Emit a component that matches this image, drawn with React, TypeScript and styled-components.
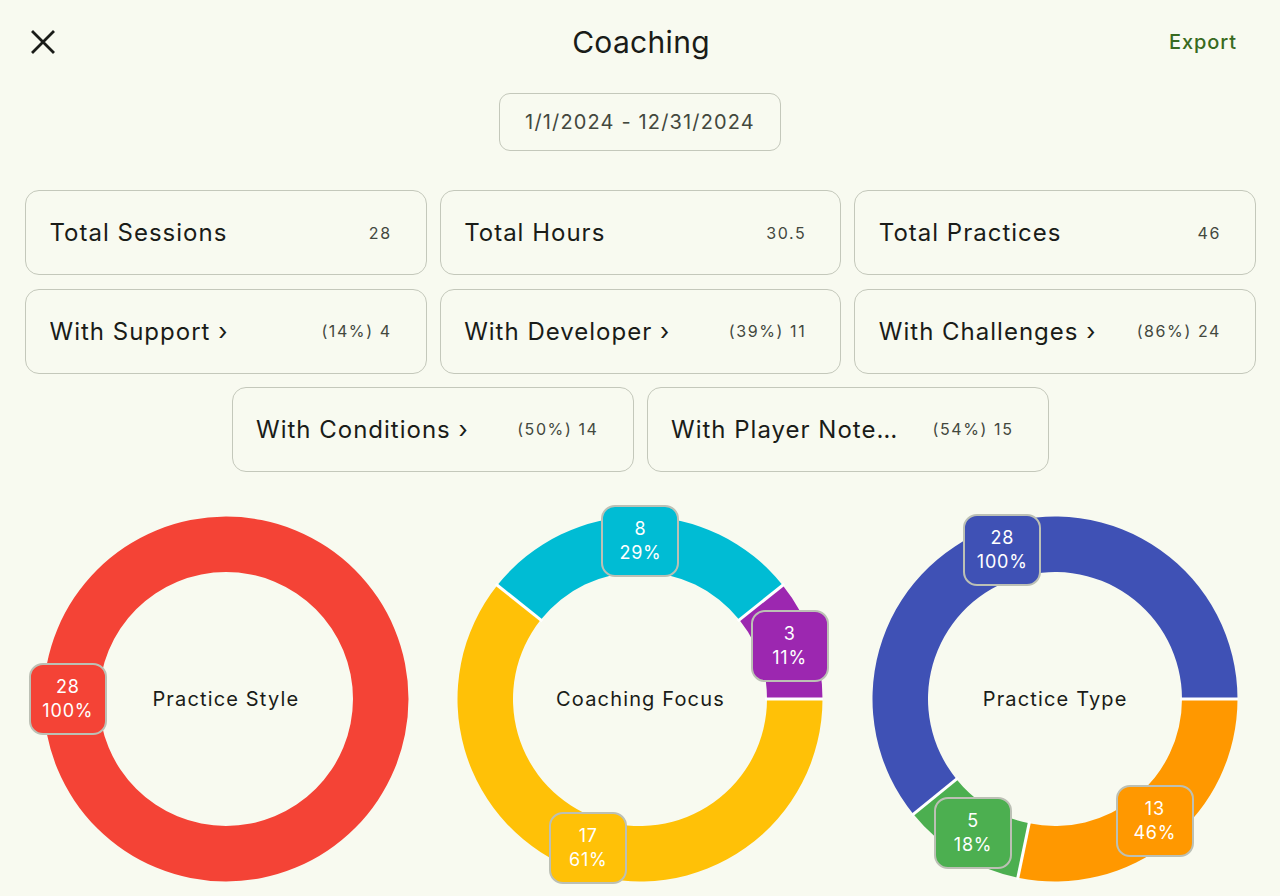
import React from 'react';
import styled, { createGlobalStyle } from 'styled-components';

const BG = '#f8faf0';
const OUTLINE = '#c4c8bb';
const TEXT = '#1a1c18';
const TEXT_SOFT = '#43483e';

interface Stat {
  label: string;
  value: string;
  link?: boolean;
}

interface Slice {
  value: number;
  percent: string;
  color: string;
}

interface Chart {
  title: string;
  slices: Slice[];
}

const topStats: Stat[] = [
  { label: 'Total Sessions', value: '28' },
  { label: 'Total Hours', value: '30.5' },
  { label: 'Total Practices', value: '46' },
  { label: 'With Support', value: '(14%) 4', link: true },
  { label: 'With Developer', value: '(39%) 11', link: true },
  { label: 'With Challenges', value: '(86%) 24', link: true },
];

const lastStats: Stat[] = [
  { label: 'With Conditions', value: '(50%) 14', link: true },
  { label: 'With Player Notes', value: '(54%) 15', link: true },
];

const charts: Chart[] = [
  {
    title: 'Practice Style',
    slices: [{ value: 28, percent: '100%', color: '#f44336' }],
  },
  {
    title: 'Coaching Focus',
    slices: [
      { value: 17, percent: '61%', color: '#ffc107' },
      { value: 8, percent: '29%', color: '#00bcd4' },
      { value: 3, percent: '11%', color: '#9c27b0' },
    ],
  },
  {
    title: 'Practice Type',
    slices: [
      { value: 13, percent: '46%', color: '#ff9800' },
      { value: 5, percent: '18%', color: '#4caf50' },
      { value: 28, percent: '100%', color: '#3f51b5' },
    ],
  },
];

const SIZE = 366;
const C = SIZE / 2;
const OUTER = 182.5;
const INNER = 127;
const BADGE_R = 158;

const rad = (deg: number) => (deg * Math.PI) / 180;
const pt = (r: number, deg: number) => [C + r * Math.cos(rad(deg)), C + r * Math.sin(rad(deg))];

const sectorPath = (a0: number, a1: number) => {
  if (a1 - a0 >= 359.999) {
    return `M ${C + OUTER} ${C} A ${OUTER} ${OUTER} 0 1 1 ${C - OUTER} ${C} A ${OUTER} ${OUTER} 0 1 1 ${C + OUTER} ${C} Z M ${C + INNER} ${C} A ${INNER} ${INNER} 0 1 0 ${C - INNER} ${C} A ${INNER} ${INNER} 0 1 0 ${C + INNER} ${C} Z`;
  }
  const large = a1 - a0 > 180 ? 1 : 0;
  const [ox0, oy0] = pt(OUTER, a0);
  const [ox1, oy1] = pt(OUTER, a1);
  const [ix1, iy1] = pt(INNER, a1);
  const [ix0, iy0] = pt(INNER, a0);
  return `M ${ox0} ${oy0} A ${OUTER} ${OUTER} 0 ${large} 1 ${ox1} ${oy1} L ${ix1} ${iy1} A ${INNER} ${INNER} 0 ${large} 0 ${ix0} ${iy0} Z`;
};

const GlobalStyle = createGlobalStyle`
  html, body {
    margin: 0;
    padding: 0;
    background: ${BG};
  }
  body {
    font-family: Inter, "Noto Sans", sans-serif;
    color: ${TEXT};
    -webkit-font-smoothing: antialiased;
  }
`;

const Page = styled.div`
  width: 1280px;
  height: 896px;
  overflow: hidden;
  background: ${BG};
  display: flex;
  flex-direction: column;
`;

const Header = styled.header`
  height: 84px;
  display: grid;
  grid-template-columns: 1fr auto 1fr;
  align-items: center;
  padding: 0 43px;
`;

const CloseButton = styled.button`
  justify-self: start;
  margin-left: -17px;
  width: 34px;
  height: 34px;
  padding: 0;
  border: none;
  background: none;
  display: flex;
  align-items: center;
  justify-content: center;
  cursor: pointer;
`;

const Title = styled.h1`
  margin: 0 0 0 2px;
  font-size: 30px;
  font-weight: 400;
  letter-spacing: 0.3px;
  color: ${TEXT};
`;

const ExportButton = styled.button`
  justify-self: end;
  border: none;
  background: none;
  padding: 0;
  font-family: inherit;
  font-size: 20px;
  font-weight: 500;
  letter-spacing: 0.9px;
  color: #386a20;
  cursor: pointer;
`;

const DateRow = styled.div`
  display: flex;
  justify-content: center;
  padding-top: 9px;
`;

const DateButton = styled.button`
  width: 282px;
  height: 58px;
  border: 1.5px solid ${OUTLINE};
  border-radius: 11px;
  background: transparent;
  font-family: inherit;
  font-size: 20px;
  letter-spacing: 1.15px;
  color: ${TEXT_SOFT};
`;

const StatGrid = styled.div`
  margin: 39px 24px 0 25px;
  display: grid;
  grid-template-columns: repeat(3, 1fr);
  gap: 13.5px 13px;
`;

const CenterRow = styled.div`
  display: flex;
  justify-content: center;
  gap: 13px;
  margin-top: 13px;
`;

const Card = styled.div<{ $fixed?: boolean }>`
  height: 85px;
  box-sizing: border-box;
  border: 1.5px solid ${OUTLINE};
  border-radius: 14px;
  display: flex;
  align-items: center;
  gap: 34px;
  padding: 0 34px 0 23.5px;
  width: ${(p) => (p.$fixed ? '402px' : 'auto')};
`;

const CardLabel = styled.span`
  flex: 1;
  min-width: 0;
  white-space: nowrap;
  overflow: hidden;
  text-overflow: ellipsis;
  font-size: 24px;
  letter-spacing: 1px;
  color: ${TEXT};
`;

const CardValue = styled.span`
  flex: none;
  font-size: 16px;
  letter-spacing: 1.6px;
  color: ${TEXT_SOFT};
`;

const ChartGrid = styled.div`
  margin: 44px 24px 0 25px;
  display: grid;
  grid-template-columns: repeat(3, 1fr);
  gap: 13px;
`;

const ChartCell = styled.div`
  display: flex;
  justify-content: center;
`;

const ChartBox = styled.div`
  position: relative;
  width: ${SIZE}px;
  height: ${SIZE}px;
`;

const ChartTitle = styled.div`
  position: absolute;
  inset: 0;
  display: flex;
  align-items: center;
  justify-content: center;
  font-size: 20px;
  letter-spacing: 1.15px;
  color: ${TEXT};
`;

const Badge = styled.div<{ $color: string }>`
  position: absolute;
  width: 78px;
  height: 72px;
  box-sizing: border-box;
  border: 2px solid #bcc0b5;
  border-radius: 14px;
  background: ${(p) => p.$color};
  color: #fff;
  display: flex;
  flex-direction: column;
  align-items: center;
  justify-content: center;
  font-size: 18px;
  line-height: 24px;
  letter-spacing: 0.8px;
`;

const StatCard = ({ stat, fixed }: { stat: Stat; fixed?: boolean }) => (
  <Card $fixed={fixed}>
    <CardLabel>
      {stat.label}
      {stat.link ? ' ›' : ''}
    </CardLabel>
    <CardValue>{stat.value}</CardValue>
  </Card>
);

const Donut = ({ chart }: { chart: Chart }) => {
  const total = chart.slices.reduce((s, x) => s + x.value, 0);
  let angle = 0;
  const parts = chart.slices.map((slice) => {
    const sweep = (slice.value / total) * 360;
    const start = angle;
    angle += sweep;
    return { ...slice, start, end: angle, mid: start + sweep / 2 };
  });
  const multi = parts.length > 1;

  return (
    <ChartBox>
      <svg width={SIZE} height={SIZE} viewBox={`0 0 ${SIZE} ${SIZE}`}>
        {parts.map((p, i) => (
          <path key={i} d={sectorPath(p.start, p.end)} fill={p.color} fillRule="evenodd" />
        ))}
        {multi &&
          parts.map((p, i) => {
            const [x0, y0] = pt(INNER - 2, p.start);
            const [x1, y1] = pt(OUTER + 2, p.start);
            return <line key={i} x1={x0} y1={y0} x2={x1} y2={y1} stroke="#ffffff" strokeWidth={3} />;
          })}
      </svg>
      <ChartTitle>{chart.title}</ChartTitle>
      {parts.map((p, i) => {
        const [x, y] = pt(BADGE_R, p.mid);
        return (
          <Badge key={i} $color={p.color} style={{ left: x - 39, top: y - 36 }}>
            <span>{p.value}</span>
            <span>{p.percent}</span>
          </Badge>
        );
      })}
    </ChartBox>
  );
};

export default function App() {
  return (
    <>
      <GlobalStyle />
      <Page>
        <Header>
          <CloseButton aria-label="Close">
            <svg width="26" height="26" viewBox="0 0 26 26">
              <path d="M3 3 L23 23 M23 3 L3 23" stroke={TEXT} strokeWidth="2.8" strokeLinecap="square" />
            </svg>
          </CloseButton>
          <Title>Coaching</Title>
          <ExportButton>Export</ExportButton>
        </Header>
        <DateRow>
          <DateButton>1/1/2024 - 12/31/2024</DateButton>
        </DateRow>
        <StatGrid>
          {topStats.map((s) => (
            <StatCard key={s.label} stat={s} />
          ))}
        </StatGrid>
        <CenterRow>
          {lastStats.map((s) => (
            <StatCard key={s.label} stat={s} fixed />
          ))}
        </CenterRow>
        <ChartGrid>
          {charts.map((c) => (
            <ChartCell key={c.title}>
              <Donut chart={c} />
            </ChartCell>
          ))}
        </ChartGrid>
      </Page>
    </>
  );
}
